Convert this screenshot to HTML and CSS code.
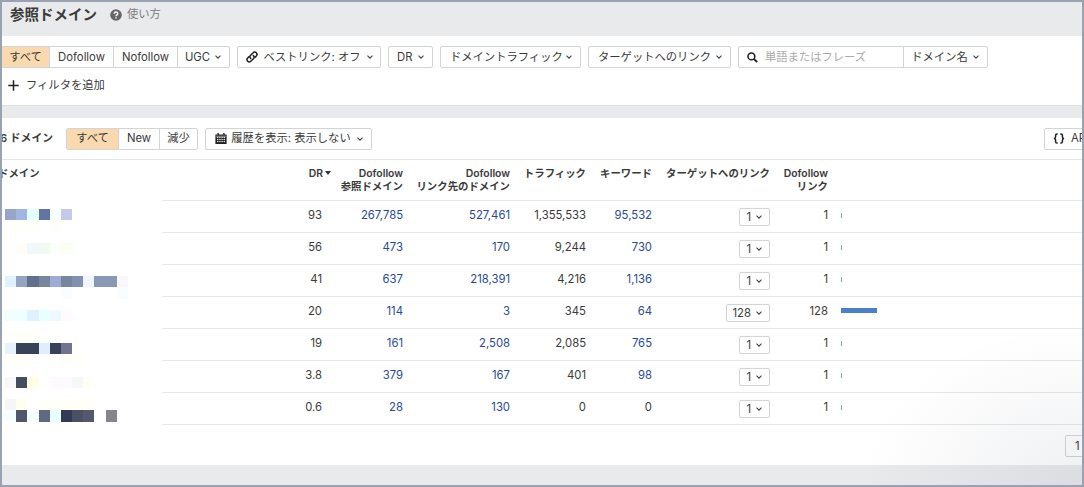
FILE: index.html
```
<!DOCTYPE html>
<html lang="ja">
<head>
  <meta charset="utf-8">
  <title>参照ドメイン</title>
  <link rel="stylesheet" href="styles.css">
</head>
<body>
  <!-- shared icons -->
  <svg class="defs" width="0" height="0">
    <symbol id="chev" viewBox="0 0 8 6"><path d="M1.5 1.6 4 4.1 6.5 1.6" fill="none" stroke="#444" stroke-width="1.1"/></symbol>
  </svg>

  <div class="frame">
    <div class="top">
      <h1>参照ドメイン</h1>
      <svg class="help" width="12" height="12" viewBox="0 0 12 12"><circle cx="6" cy="6" r="5.8" fill="#666"/><path d="M4.2 4.7C4.2 2.4 7.8 2.5 7.8 4.6 7.8 5.9 6 5.8 6 7.2M6 8.2v1.4" fill="none" stroke="#fff" stroke-width="1.4"/></svg>
      <span class="howto">使い方</span>
    </div>

    <div class="panel filters">
      <div class="bar">
        <div class="group main">
          <span class="seg on">すべて</span><span class="seg">Dofollow</span><span class="seg">Nofollow</span><span class="seg">UGC <svg class="chev"><use href="#chev"/></svg></span>
        </div>
        <div class="btn best">
          <svg class="ico" width="12" height="12" viewBox="0 0 12 12"><g fill="none" stroke="#222" stroke-width="1.5" stroke-linecap="round"><path d="M4.7 7.4C3.5 6.2 3.8 5.1 4.6 4.3L6.9 2C8 .8 9.4.9 10.3 1.8s.9 2.2 0 3.2L9.2 6.1"/><path d="M7.3 4.6c1.2 1.2.9 2.3.1 3.1L5.1 10c-1.1 1.2-2.5 1.1-3.4.2s-.9-2.2 0-3.2l1.1-1.1"/></g></svg>
          <span>ベストリンク: オフ</span><svg class="chev"><use href="#chev"/></svg>
        </div>
        <div class="btn dr"><span>DR</span><svg class="chev"><use href="#chev"/></svg></div>
        <div class="btn traffic"><span>ドメイントラフィック</span><svg class="chev"><use href="#chev"/></svg></div>
        <div class="btn target"><span>ターゲットへのリンク</span><svg class="chev"><use href="#chev"/></svg></div>
        <div class="group search">
          <span class="field"><svg width="11" height="11" viewBox="0 0 11 11"><circle cx="4.4" cy="4.4" r="3.4" fill="none" stroke="#222" stroke-width="1.6"/><path d="M7 7l3.2 3.2" stroke="#222" stroke-width="1.9"/></svg>単語またはフレーズ</span>
          <span class="seg scope">ドメイン名 <svg class="chev"><use href="#chev"/></svg></span>
        </div>
      </div>
      <div class="add">
        <svg width="11" height="11" viewBox="0 0 11 11"><path d="M5.5.3v10.4M.3 5.5h10.4" stroke="#222" stroke-width="1.5"/></svg>
        <span>フィルタを追加</span>
      </div>
    </div>

    <div class="panel results">
      <div class="toolbar">
        <div class="count">6 ドメイン</div>
        <div class="group state"><span class="seg on">すべて</span><span class="seg">New</span><span class="seg">減少</span></div>
        <div class="btn history">
          <svg class="ico" width="12" height="11" viewBox="0 0 12 11"><path d="M.4 1.4H2.4V0h1.4v1.4h4.4V0h1.4v1.4h2V11H.4z" fill="#222"/><path d="M2 4.6h8M2 6.6h8M2 8.6h8" stroke="#fff" stroke-width="1" stroke-dasharray="1.4 .8"/><path d="M1.2 3.2h9.6" stroke="#fff" stroke-width=".6"/></svg>
          <span>履歴を表示: 表示しない</span><svg class="chev"><use href="#chev"/></svg>
        </div>
        <div class="btn api">
          <svg width="12" height="11" viewBox="0 0 12 11"><path d="M4.7.9H4C2.9.9 2.6 1.4 2.6 2.3v1.5c0 1-.5 1.7-1.7 1.7 1.2 0 1.7.7 1.7 1.7v1.5c0 .9.3 1.4 1.4 1.4h.7M7.3.9H8c1.1 0 1.4.5 1.4 1.4v1.5c0 1 .5 1.7 1.7 1.7-1.2 0-1.7.7-1.7 1.7v1.5c0 .9-.3 1.4-1.4 1.4h-.7" fill="none" stroke="#222" stroke-width="1.5"/></svg>
          <span>API</span>
        </div>
      </div>

      <div class="data">
        <div class="domains">
          <div class="dhead">ドメイン</div>
          <!-- pixelated domain names, one unit = one mosaic block -->
          <svg class="mosaic" width="134" height="235" viewBox="0 0 12 21" preserveAspectRatio="none" shape-rendering="crispEdges">
            <g id="r1"><path fill="#98a5cb" d="M0 0h1v1h-1z"/><path fill="#a0b5df" d="M1 0h1v1h-1z"/><path fill="#e5ffff" d="M2 0h1v1h-1z"/><path fill="#60759f" d="M3 0h1v1h-1z"/><path fill="#f7ffff" d="M4 0h1v1h-1z"/><path fill="#c6cae8" d="M5 0h1v1h-1z"/><path fill="#fffffa" d="M0 1h3v1h-3zM4 1h1v1h-1z"/></g>
            <g id="r2"><path fill="#fffcfa" d="M1 3h1v1h-1z"/><path fill="#f2f7f9" d="M2 3h1v1h-1z"/><path fill="#f0f9f2" d="M3 3h1v1h-1z"/><path fill="#fafffa" d="M4 3h1v1h-1z"/><path fill="#fbfff2" d="M5 3h1v1h-1z"/></g>
            <g id="r3"><path fill="#dff2ff" d="M0 6h1v1h-1z"/><path fill="#95a4c0" d="M1 6h1v1h-1z"/><path fill="#61708c" d="M2 6h1v1h-1z"/><path fill="#76869f" d="M3 6h1v1h-1z"/><path fill="#a0abd3" d="M4 6h1v1h-1z"/><path fill="#76869f" d="M5 6h1v1h-1z"/><path fill="#8490b0" d="M6 6h1v1h-1z"/><path fill="#f0f5ff" d="M7 6h1v1h-1z"/><path fill="#8899b5" d="M8 6h2v1h-2z"/><path fill="#f8f8fc" d="M10 6h1v1h-1z"/><path fill="#fafdff" d="M5 7h1v1h-1zM10 7h1v1h-1z"/></g>
            <g id="r4"><path fill="#efffff" d="M0 9h2v1h-2z"/><path fill="#dff0ff" d="M2 9h1v1h-1z"/><path fill="#e7ffff" d="M3 9h1v1h-1z"/><path fill="#f0f8ff" d="M4 9h1v1h-1z"/><path fill="#fffafe" d="M5 9h1v1h-1z"/></g>
            <g id="r5"><path fill="#e5f3ff" d="M0 12h1v1h-1z"/><path fill="#394358" d="M1 12h2v1h-2z"/><path fill="#e0edff" d="M3 12h1v1h-1z"/><path fill="#37415b" d="M4 12h1v1h-1z"/><path fill="#717490" d="M5 12h1v1h-1z"/><path fill="#fefff8" d="M0 13h2v1h-2zM5 13h2v1h-2zM0 11h3v1h-3z"/></g>
            <g id="r6"><path fill="#f9f8f8" d="M0 15h1v1h-1z"/><path fill="#454d60" d="M1 15h1v1h-1z"/><path fill="#ffffe5" d="M2 15h1v1h-1z"/><path fill="#fdf9ff" d="M4 15h2v1h-2z"/><path fill="#f6f7f7" d="M6 15h1v1h-1z"/><path fill="#fefff5" d="M7 15h1v1h-1z"/></g>
            <g id="r7"><path fill="#f6f7f5" d="M0 17h1v1h-1z"/><path fill="#fffff0" d="M1 17h1v1h-1z"/><path fill="#fffff7" d="M3 17h5v1h-5z"/><path fill="#f5ffff" d="M0 18h1v1h-1zM2 18h1v1h-1z"/><path fill="#50576a" d="M1 18h1v1h-1z"/><path fill="#5e6982" d="M3 18h1v1h-1z"/><path fill="#e8ffff" d="M4 18h1v1h-1z"/><path fill="#343956" d="M5 18h1v1h-1z"/><path fill="#4b5162" d="M6 18h1v1h-1z"/><path fill="#53586e" d="M7 18h1v1h-1z"/><path fill="#83858f" d="M9 18h1v1h-1z"/></g>
          </svg>
        </div>

        <div class="table">
          <div class="row head">
            <span>DR<i class="sort"></i></span><span>Dofollow<br>参照ドメイン</span><span>Dofollow<br>リンク先のドメイン</span><span>トラフィック</span><span>キーワード</span><span>ターゲットへのリンク</span><span>Dofollow<br>リンク</span>
          </div>
          <div class="row"><span>93</span><a>267,785</a><a>527,461</a><span>1,355,533</span><a>95,532</a><span class="pick"><b>1 <svg class="chev"><use href="#chev"/></svg></b></span><span>1</span><i class="spark"></i></div>
          <div class="row"><span>56</span><a>473</a><a>170</a><span>9,244</span><a>730</a><span class="pick"><b>1 <svg class="chev"><use href="#chev"/></svg></b></span><span>1</span><i class="spark"></i></div>
          <div class="row"><span>41</span><a>637</a><a>218,391</a><span>4,216</span><a>1,136</a><span class="pick"><b>1 <svg class="chev"><use href="#chev"/></svg></b></span><span>1</span><i class="spark"></i></div>
          <div class="row"><span>20</span><a>114</a><a>3</a><span>345</span><a>64</a><span class="pick"><b>128 <svg class="chev"><use href="#chev"/></svg></b></span><span>128</span><i class="spark full"></i></div>
          <div class="row"><span>19</span><a>161</a><a>2,508</a><span>2,085</span><a>765</a><span class="pick"><b>1 <svg class="chev"><use href="#chev"/></svg></b></span><span>1</span><i class="spark"></i></div>
          <div class="row"><span>3.8</span><a>379</a><a>167</a><span>401</span><a>98</a><span class="pick"><b>1 <svg class="chev"><use href="#chev"/></svg></b></span><span>1</span><i class="spark"></i></div>
          <div class="row"><span>0.6</span><a>28</a><a>130</a><span>0</span><span>0</span><span class="pick"><b>1 <svg class="chev"><use href="#chev"/></svg></b></span><span>1</span><i class="spark"></i></div>
        </div>
      </div>

      <div class="pager"><span class="btn page">1</span></div>
    </div>
    <div class="shade"></div>
  </div>
</body>
</html>
```
FILE: styles.css
```
* { box-sizing: border-box; }
body {
  margin: 0;
  font-family: Inter, "Noto Sans CJK JP", sans-serif;
  font-size: 11.3px;
  line-height: 13px;
  color: #3a3a3a;
}
.defs { position: absolute; }

.frame {
  position: relative;
  width: 1084px;
  height: 487px;
  border: 2px solid #98a2b1;
  background: #e9eaec;
  overflow: hidden;
}

.top { display: flex; align-items: center; height: 34px; padding: 0 0 9px 8px; }
h1 { margin: 0 13px 0 0; width: 87px; font-size: 14.5px; line-height: 20px; font-weight: 600; white-space: nowrap; }
.help { margin-right: 5px; }
.howto { color: #808080; }

.panel { background: #fff; }
.filters { height: 70px; padding-top: 10px; border-bottom: 1px solid #dfe0e2; }
.bar { display: flex; gap: 7px; }
.bar .main { margin-left: -1px; }

.btn, .group {
  display: flex;
  align-items: center;
  flex: none;
  height: 22px;
  border: 1px solid #d3d4d6;
  border-radius: 2px;
  background: #fff;
  white-space: nowrap;
}
.btn { padding: 0 7px 0 9px; justify-content: space-between; }
.chev { width: 8px; height: 6px; flex: none; }
.seg {
  display: flex;
  align-items: center;
  justify-content: center;
  height: 20px;
  border-left: 1px solid #d3d4d6;
}
.seg:first-child { border-left: 0; }
.on { background: #fbd9ae; }
.seg .chev { margin-left: 4px; }

.main { width: 229px; }
.main .seg:nth-child(1) { width: 47px; }
.main .seg:nth-child(2) { width: 64px; }
.main .seg:nth-child(3) { width: 64px; }
.main .seg:nth-child(4) { flex: 1; }
.best { width: 144px; padding: 0 6px 0 8px; }
.dr { width: 45px; padding-left: 8px; }
.traffic { width: 141px; }
.target { width: 143px; }
.search { width: 250px; }
.field { display: flex; align-items: center; width: 164px; padding-left: 8px; color: #aaa; }
.field svg { margin-right: 7px; }
.scope { flex: 1; }

.add { display: flex; align-items: center; gap: 7px; padding: 11px 0 0 6px; }

.results { margin-top: 12px; height: 347px; }
.toolbar { display: flex; align-items: center; height: 42px; border-bottom: 1px solid #e3e4e6; }
.count { display: flex; justify-content: flex-end; flex: none; width: 51px; white-space: nowrap; font-weight: 600; font-size: 10.8px; }
.state { width: 132px; margin-left: 13px; }
.state .seg:nth-child(1) { width: 51px; }
.state .seg:nth-child(2) { width: 41px; }
.state .seg:nth-child(3) { flex: 1; }
.history { width: 167px; margin-left: 7px; }
.history .ico { margin-right: -1px; }
.api { width: 70px; margin-left: auto; margin-right: -32px; justify-content: flex-start; gap: 6px; padding-left: 8px; }

.data { display: flex; }
.domains { width: 160px; height: 264px; overflow: hidden; }
.dhead { height: 49px; margin-left: -4px; padding-top: 7px; font-size: 10.4px; font-weight: 600; }
.mosaic { display: block; margin-left: 3px; }

.table { flex: 1; }
.row {
  display: grid;
  grid-template-columns: 160px 81px 107px 76px 66px 118px 58px 1fr;
  height: 32px;
  border-bottom: 1px solid #e6e7e8;
  text-align: right;
  padding-top: 8px;
}
.row a { color: #28499a; }
.head { height: 41px; padding-top: 7px; font-size: 10.4px; font-weight: 600; white-space: nowrap; }
.head span:first-child { margin-right: -9px; }
.sort { display: inline-block; margin: 0 0 2px 2px; border: 3.5px solid transparent; border-top: 4px solid #333; border-bottom: 0; }
.pick { display: flex; justify-content: flex-end; margin-top: -1px; }
.pick b { display: flex; align-items: center; gap: 4px; height: 18px; padding: 0 6px; font-weight: 400; border: 1px solid #d3d4d6; border-radius: 2px; }
.spark { width: 1px; height: 5px; margin: 4px 0 0 13px; background: #7d9dc9; }
.full { width: 36px; margin-top: 3px; background: #4a80c9; }

.pager { display: flex; justify-content: flex-end; padding-top: 10px; }
.page { width: 30px; margin-right: -13px; justify-content: flex-start; }

/* soft darkening in the lower right corner */
.shade {
  position: absolute;
  right: 0;
  bottom: 0;
  width: 220px;
  height: 160px;
  background: radial-gradient(farthest-side at 100% 100%, rgba(80, 90, 115, .09), rgba(80, 90, 115, .04) 55%, rgba(80, 90, 115, 0));
}
```
